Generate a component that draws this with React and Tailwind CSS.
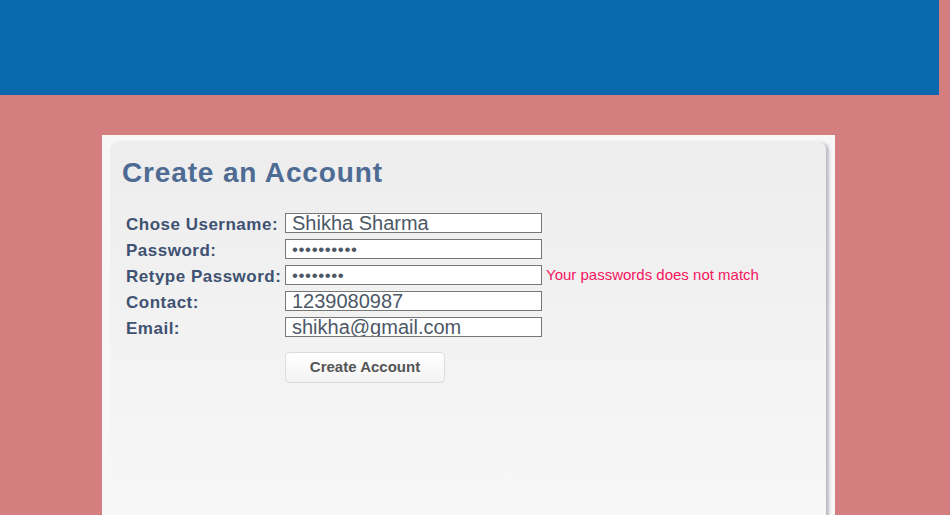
import React from 'react';

const rows = [
  { label: 'Chose Username:', value: 'Shikha Sharma', type: 'text' },
  { label: 'Password:', value: '••••••••••', type: 'dots' },
  { label: 'Retype Password:', value: '••••••••', type: 'dots', error: 'Your passwords does not match' },
  { label: 'Contact:', value: '1239080987', type: 'text' },
  { label: 'Email:', value: 'shikha@gmail.com', type: 'text' },
];

export default function App() {
  return (
    <div className="min-h-screen bg-[#d47e7f] font-['Liberation_Sans',Arial,sans-serif]">
      <header className="h-[95px] w-[939px] bg-[#0a69ae]" />

      <div className="ml-[102px] mt-[40px] h-[420px] w-[733px] bg-[#f7f7f7] pl-[8px] pr-[9px] pt-[7px]">
        <div className="h-full rounded-t-lg bg-gradient-to-b from-[#ededed] to-[#f8f8f8] pl-[12px] pt-[13px] shadow-[3px_1px_3px_rgba(120,110,140,0.45)]">
          <h1 className="text-[28px] font-bold leading-[36px] tracking-[0.85px] text-[#4e6b94]">
            Create an Account
          </h1>

          <div className="mt-[22px] flex flex-col gap-[6px] pl-[4px]">
            {rows.map((r) => (
              <div key={r.label} className="flex h-[20px] items-center">
                <label className="h-[20px] w-[159px] whitespace-nowrap pt-[2px] text-[17px] font-bold leading-[20px] tracking-[0.5px] text-[#3f5272]">
                  {r.label}
                </label>
                <div className="flex h-[20px] w-[257px] items-center overflow-hidden border border-[#777] bg-white px-[6px]">
                  {r.type === 'dots' ? (
                    <span className="text-[17px] leading-none tracking-[0.6px] text-[#4d5866]">{r.value}</span>
                  ) : (
                    <span className="whitespace-nowrap text-[20px] leading-[20px] text-[#4d5866]">{r.value}</span>
                  )}
                </div>
                {r.error && (
                  <span className="ml-[4px] whitespace-nowrap text-[15px] text-[#f5165f]">{r.error}</span>
                )}
              </div>
            ))}

            <div className="mt-[9px] pl-[159px]">
              <button className="h-[31px] w-[160px] rounded-[4px] border border-[#dcdcdc] bg-gradient-to-b from-[#ffffff] to-[#f3f3f3] text-[15px] font-bold text-[#555]">
                Create Account
              </button>
            </div>
          </div>
        </div>
      </div>
    </div>
  );
}
